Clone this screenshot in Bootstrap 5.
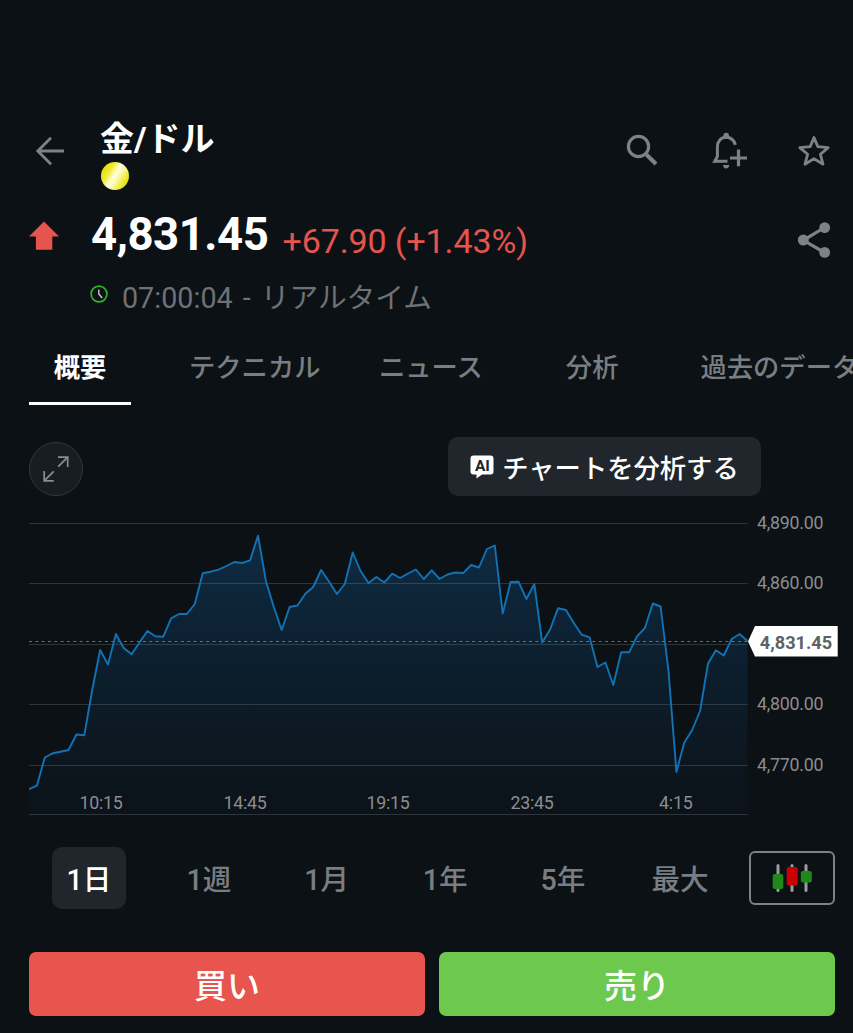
<!DOCTYPE html>
<html lang="ja" data-bs-theme="dark">
<head>
<meta charset="utf-8">
<meta name="viewport" content="width=device-width, initial-scale=1">
<title>金/ドル</title>
<link href="https://cdn.jsdelivr.net/npm/bootstrap@5.3.0/dist/css/bootstrap.min.css" rel="stylesheet">
<style>
  body { background: #0c1115; color: #fff; font-family: Roboto, "Noto Sans CJK JP", sans-serif; overflow: hidden; height: 1033px; }
  svg { display: block; flex: none; }
  .btn { --bs-btn-padding-x: 0; --bs-btn-padding-y: 0; line-height: 1; }
  .icon-btn, .icon-btn:hover { color: #7d8286; border: 0; }
  .top-bar { padding: 110px 22px 0 35px; height: 200px; }
  .back-btn { margin-top: 26px; }
  .asset { margin-left: 35px; }
  .top-actions { margin-top: 20px; }
  .asset-name { font-size: 34px; font-weight: 700; line-height: 40px; margin: 9px 0 3px; }
  .gold-dot { width: 28px; height: 28px; margin-left: 1px; background: linear-gradient(122deg, #e3e000 12%, #efec37 32%, #fffde0 48%, #fbf9b0 58%, #eae61c 80%, #d9d600); }
  .quote-row { height: 60px; padding: 0 22px 0 29px; margin-top: 5px; }
  .up-arrow { margin-top: 16px; }
  .last-price { font-size: 45.5px; letter-spacing: -.45px; font-weight: 700; line-height: 60px; margin-left: 32px; }
  .change { color: #e5544d; font-size: 34px; line-height: 60px; margin-left: 14px; padding-top: 6px; letter-spacing: -.1px; }
  .share-btn { margin-top: 16px; }
  .stamp { height: 40px; margin-top: 11px; padding-left: 90px; color: #6e7276; font-size: 28.7px; line-height: 44px; }
  .stamp svg { margin-top: 9px; }
  .stamp span { margin-left: 14px; word-spacing: 3px; }
  .tab-strip { height: 65px; margin: 24px 0 0 29px; }
  .tab-strip .nav-link { color: #797e82; font-size: 26.3px; font-weight: 500; line-height: 56px; padding: 0; white-space: nowrap; border-radius: 0; text-align: center; height: 65px; }
  .tab-strip .nav-link.active { color: #fff; font-weight: 700; width: 102px; border-bottom: 3px solid #fff; }
  .chart-tools { height: 59px; margin: 32px 92px 0 29px; }
  .expand-btn { width: 54px; height: 54px; margin-top: 5px; background: #181d24; border: 1.5px solid #34383c; color: #8a8d8d; }
  .ai-btn, .ai-btn:hover { width: 313px; height: 59px; background: #20262c; color: #fff; border: 0; border-radius: 10px; font-size: 26.3px; font-weight: 500; }
  .ai-btn svg { margin-right: 8px; }
  .ai-btn span { padding-top: 5px; }
  .price-chart { margin: 14px 0 0 29px; }
  .axis-text { fill: #8b8d8f; font-size: 17.8px; letter-spacing: -.22px; }
  .range-row { height: 62px; margin: 27px 18px 0 52px; }
  .range-btn, .range-btn:hover { height: 62px; padding-top: 5px; color: #797e82; border: 0; border-radius: 10px; font-size: 28.6px; font-weight: 500; }
  .range-btn.active, .range-btn.active:hover { width: 74px; background: #20262c; color: #fff; }
  .candle-btn { width: 86px; height: 54px; border: 2px solid #7d8286; border-radius: 6px; }
  .trade-row { margin: 43px 18px 0 29px; gap: 14px; }
  .trade-btn, .trade-btn:hover { height: 64px; padding-top: 5px; border: 0; border-radius: 7px; color: #fff; font-size: 33px; font-weight: 500; }
  .buy, .buy:hover { background: #e8554e; }
  .sell, .sell:hover { background: #6dc94e; }
</style>
</head>
<body>
<header class="top-bar d-flex align-items-start">
  <button class="btn icon-btn back-btn" aria-label="戻る">
    <svg width="30" height="30" viewBox="0 0 30 30" fill="none" stroke="currentColor" stroke-width="2.8"><path d="M29 15H3M16 1.8 2.8 15 16 28.2"/></svg>
  </button>
  <div class="asset flex-grow-1">
    <h1 class="asset-name">金/ドル</h1>
    <div class="gold-dot rounded-circle"></div>
  </div>
  <div class="top-actions d-flex">
    <button class="btn icon-btn me-5" aria-label="検索">
      <svg width="38" height="40" viewBox="0 0 38 40" fill="none" stroke="currentColor"><circle cx="17.5" cy="16.5" r="10.1" stroke-width="3.2"/><path d="M24.8 24 26.5 25.6" stroke-width="3"/><path d="M25.8 25 35 34" stroke-width="4.2"/></svg>
    </button>
    <button class="btn icon-btn me-5" aria-label="アラート">
      <svg width="42" height="40" viewBox="0 0 42 40" fill="none" stroke="currentColor" stroke-width="3"><path d="M28.4 14.8C27 10 23.5 7.2 19.2 7.2c-5.4 0-8.8 4-8.8 9.8v9.5l-2.6 4.7H20.5" stroke-linejoin="round"/><path d="M5 32.8 9 28v4.8z" fill="currentColor" stroke="none"/><path d="M16.4 7V5.5a2.8 2.8 0 0 1 5.6 0V7z" fill="currentColor" stroke="none"/><path d="M16 35h6.3c0 4.5-6.3 4.5-6.3 0z" fill="currentColor" stroke="none"/><path d="M31.5 19.6v16.6M23 28h17" stroke-width="3.2"/></svg>
    </button>
    <button class="btn icon-btn" aria-label="お気に入り">
      <svg width="34" height="40" viewBox="0 0 34 40" fill="none" stroke="currentColor" stroke-width="2.8" stroke-linejoin="round"><path d="M17 7.5 20.8 16.6 31.2 17.6 23.4 24.3 26 34.2 17 28.6 8 34.2 10.6 24.3 2.8 17.6 13.2 16.6z"/></svg>
    </button>
  </div>
</header>

<section class="quote-row d-flex align-items-start">
  <svg class="up-arrow" width="30" height="30" viewBox="0 0 30 30"><path d="M15 .5 30 15.5H23.3V28.8H6.9V15.5H0z" fill="#e5544d"/></svg>
  <span class="last-price">4,831.45</span>
  <span class="change">+67.90 (+1.43%)</span>
  <button class="btn icon-btn share-btn ms-auto" aria-label="共有">
    <svg width="34" height="38" viewBox="0 0 34 38" fill="currentColor"><path d="M27.5 6.5 6.3 19.3 27.5 31.5" fill="none" stroke="currentColor" stroke-width="3.2"/><circle cx="27.7" cy="6.6" r="5.4"/><circle cx="6.3" cy="19" r="5.5"/><circle cx="27.7" cy="31.4" r="5.4"/></svg>
  </button>
</section>
<div class="stamp d-flex">
  <svg width="18" height="18" viewBox="0 0 18 18" fill="none"><circle cx="9" cy="9" r="7.9" stroke="#2fb52a" stroke-width="1.7"/><path d="M8.8 4.4V9l3.4 4" stroke="#c9c9c9" stroke-width="1.4"/></svg>
  <span>07:00:04 - リアルタイム</span>
</div>

<ul class="nav tab-strip flex-nowrap">
  <li><a class="nav-link active">概要</a></li>
  <li style="margin-left:58px"><a class="nav-link">テクニカル</a></li>
  <li style="margin-left:58.5px"><a class="nav-link">ニュース</a></li>
  <li style="margin-left:83px"><a class="nav-link">分析</a></li>
  <li style="margin-left:82px"><a class="nav-link">過去のデータ</a></li>
</ul>

<div class="chart-tools d-flex justify-content-between">
  <button class="btn expand-btn rounded-circle d-flex align-items-center justify-content-center" aria-label="拡大">
    <svg width="26" height="26" viewBox="0 0 26 26" fill="none" stroke="currentColor" stroke-width="1.7"><path d="M15 1.2h9.7v9.7M24.7 1.2 15.2 10.6M10.8 24.8H1.2v-9.7M1.2 24.8l9.5-9.4"/></svg>
  </button>
  <button class="btn ai-btn d-flex align-items-center justify-content-center">
    <svg width="24" height="24" viewBox="0 0 24 24"><path d="M3.5.5h17a3 3 0 0 1 3 3v13a3 3 0 0 1-3 3H12L6.5 23.5v-4h-3a3 3 0 0 1-3-3v-13a3 3 0 0 1 3-3z" fill="#fff"/><text x="12.4" y="15.6" text-anchor="middle" font-size="15.5" font-weight="700" fill="#20262c">AI</text></svg>
    <span>チャートを分析する</span>
  </button>
</div>

<svg class="price-chart" width="824" height="310" viewBox="29 510 824 310">
  <defs><linearGradient id="area" gradientUnits="userSpaceOnUse" x1="0" y1="535" x2="0" y2="815"><stop offset="0" stop-color="#0f2b42"/><stop offset=".3" stop-color="#0d2335"/><stop offset=".58" stop-color="#0c1c29"/><stop offset=".82" stop-color="#0c161e"/><stop offset="1" stop-color="#0c1219"/></linearGradient></defs>
  <path id="fill" fill="url(#area)"/>
  <path d="M29 523.5H747.5M29 583.5H747.5M29 644.5H747.5M29 704.5H747.5M29 765.5H747.5M29 814.5H747.5" stroke="#a0b4be" stroke-opacity=".22"/>
  <path d="M29 641.5H747" stroke="#7d868b" stroke-opacity=".8" stroke-dasharray="3 3.33"/>
  <path id="line" fill="none" stroke="#1272b4" stroke-width="1.9" stroke-linejoin="round"/>
  <g class="axis-text">
    <text x="757" y="529">4,890.00</text><text x="757" y="589">4,860.00</text><text x="757" y="710">4,800.00</text><text x="757" y="770.5">4,770.00</text>
    <g text-anchor="middle"><text x="101" y="809">10:15</text><text x="245" y="809">14:45</text><text x="388" y="809">19:15</text><text x="532" y="809">23:45</text><text x="675.8" y="809">4:15</text></g>
  </g>
  <path d="M748 641.5 755 626H837.7V656.5H755z" fill="#fff"/>
  <text x="796" y="649" text-anchor="middle" font-size="18.2" font-weight="700" fill="#5d6266">4,831.45</text>
</svg>

<div class="range-row d-flex align-items-center">
  <button class="btn range-btn active">1日</button>
  <button class="btn range-btn" style="margin-left:60.5px">1週</button>
  <button class="btn range-btn" style="margin-left:73px">1月</button>
  <button class="btn range-btn" style="margin-left:73.5px">1年</button>
  <button class="btn range-btn" style="margin-left:73px">5年</button>
  <button class="btn range-btn" style="margin-left:66px">最大</button>
  <button class="btn candle-btn ms-auto d-flex align-items-center justify-content-center" aria-label="ローソク足">
    <svg width="40" height="28" viewBox="0 0 40 28"><path d="M6 1.5v25M20 1.5v25M34 1.5v25" stroke="#9c9c9c" stroke-width="3" stroke-linecap="round"/><rect x=".7" y="10" width="10.6" height="15" rx="2" fill="#1f8a1a"/><rect x="14.7" y="3" width="11" height="18.6" rx="2" fill="#c90000"/><rect x="28.8" y="7" width="11" height="11.4" rx="2" fill="#1f8a1a"/></svg>
  </button>
</div>

<div class="trade-row d-flex">
  <button class="btn trade-btn buy flex-fill w-50">買い</button>
  <button class="btn trade-btn sell flex-fill w-50">売り</button>
</div>

<script src="https://cdn.jsdelivr.net/npm/bootstrap@5.3.0/dist/js/bootstrap.bundle.min.js"></script>
<script>
  // Vertical positions of the evenly spaced intraday samples
  const ys = [789,785.7,757.5,753.3,751.7,750,734.5,735.3,690,650,664.5,634,648,654.3,642.5,631,636.3,636.8,618.3,614,614,604,573.3,571.7,569.7,566,562,563,560.3,535.7,581,607,630,607,605.5,593.7,587,570,581.5,594,584,552.5,571,583,577,582.5,573.7,578,573.5,569.5,579,570.3,579,574.5,572.5,573,565,567.5,549,545.5,613.5,582,581.7,599,584,642.5,629.5,608.3,610,623,634.7,637.3,667,662.5,685,652.3,652.3,636.3,628,603.5,606.5,671,772,742.5,730,711,663.5,650.3,655.5,639,634,641];
  const d = 'M' + ys.map((y, i) => (29 + i * 718.5 / (ys.length - 1)).toFixed(1) + ' ' + y).join('L');
  document.getElementById('line').setAttribute('d', d);
  document.getElementById('fill').setAttribute('d', d + 'V814H29Z');
</script>
</body>
</html>
